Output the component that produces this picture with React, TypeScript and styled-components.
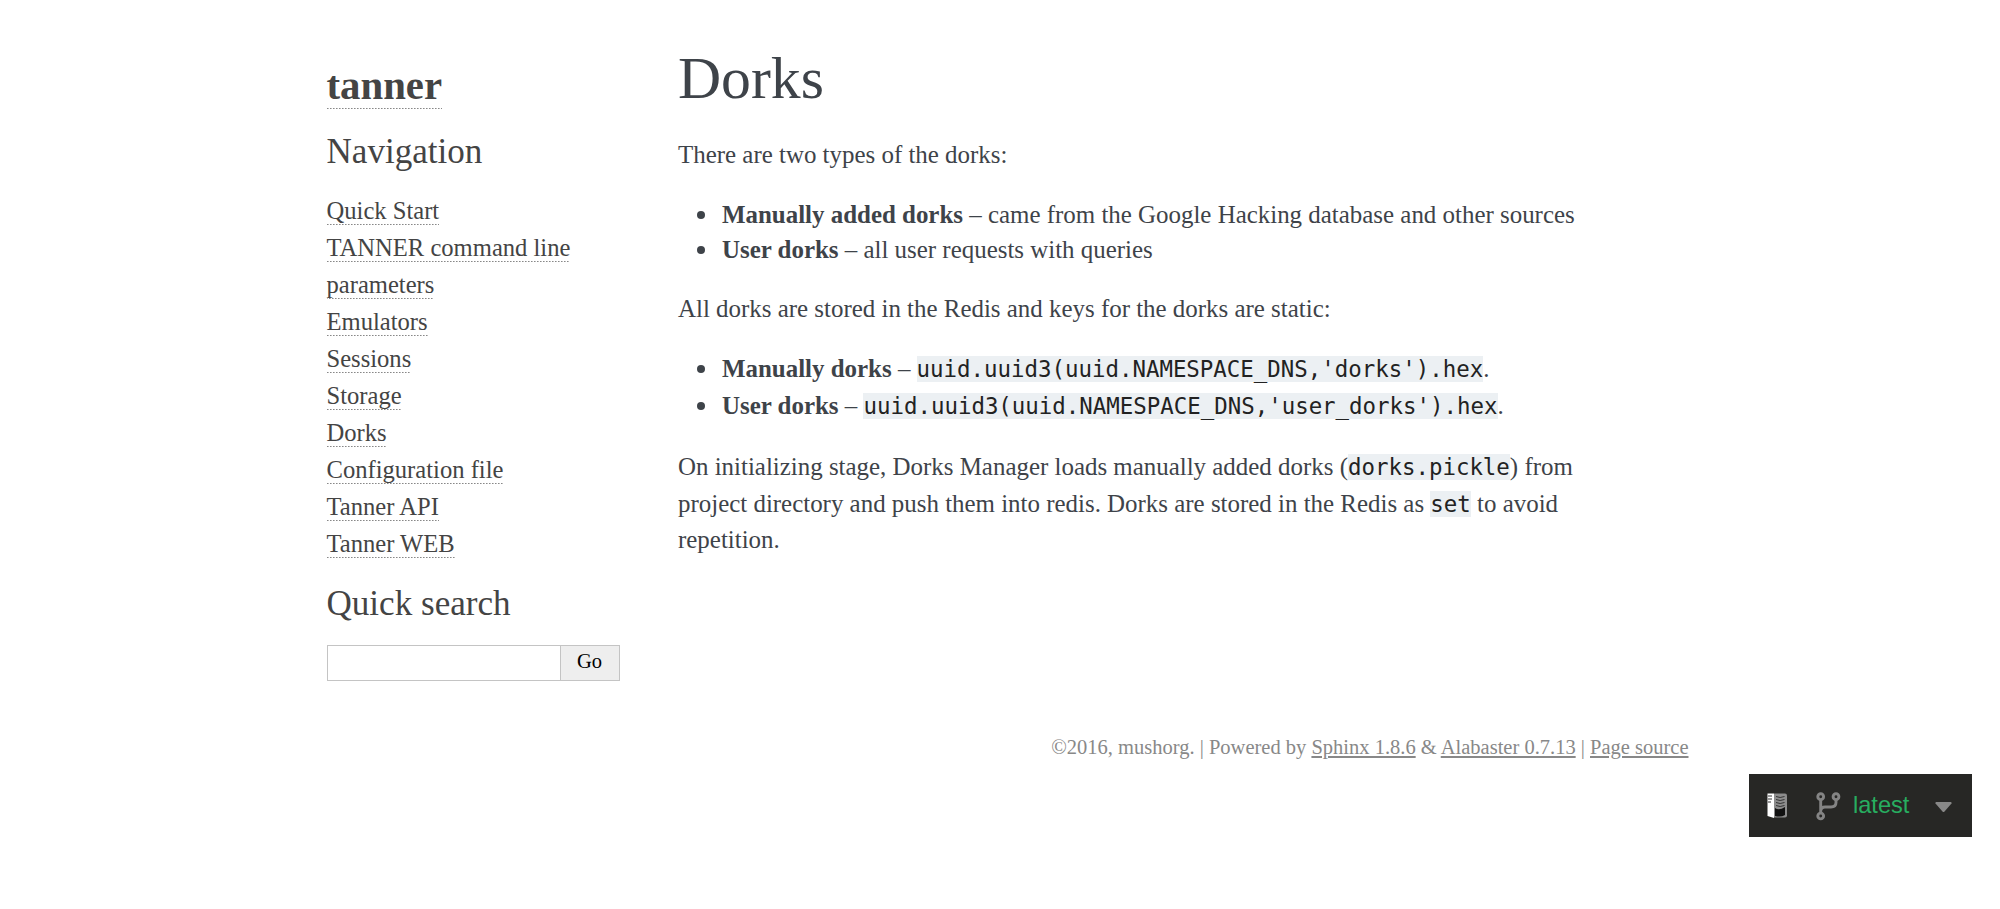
import React from "react";
import styled, { createGlobalStyle } from "styled-components";

const GlobalStyle = createGlobalStyle`
  body { margin: 0; background: #fff; color: #3e4349; font-family: "Liberation Serif", serif; }
  * { box-sizing: border-box; }
`;

const Page = styled.div`
  width: 1377px;
  margin: 0 auto;
`;

const Columns = styled.div`
  display: flex;
`;

const Sidebar = styled.aside`
  width: 322.5px;
  padding: 58px 14px 0 15px;
  color: #444;
`;

const Logo = styled.h1`
  margin: 0;
  font-size: 40.8px;
  line-height: 56px;
`;

const SideLink = styled.a`
  color: #444;
  text-decoration: none;
  padding-bottom: 1px;
  background: linear-gradient(90deg, #888 0 1px, #bbb 1px 2px, transparent 2px) left bottom / 3px 1px repeat-x;
`;

const SideHeading = styled.h3<{ $top: number; $bottom: number }>`
  margin: ${(p) => p.$top}px 0 ${(p) => p.$bottom}px;
  font-size: 35.1px;
  font-weight: 400;
  line-height: 46px;
`;

const NavList = styled.ul`
  list-style: none;
  margin: 0;
  padding: 0;
  font-size: 24.6px;
  line-height: 36.95px;
`;

const SearchForm = styled.form`
  display: flex;
  width: 293px;
  height: 36px;
`;

const SearchInput = styled.input`
  width: 233px;
  height: 36px;
  border: 1px solid #c4c4c4;
  border-right: 0;
  background: #fff;
  outline: none;
`;

const SearchButton = styled.button`
  width: 60px;
  height: 36px;
  padding: 0 0 3px;
  border: 1px solid #c4c4c4;
  background: #eee;
  color: #000;
  font: 20.5px "Liberation Serif", serif;
`;

const Body = styled.main`
  width: 1054px;
  padding: 44px 44px 0;
  font-size: 24.93px;
  line-height: 35.5px;
`;

const Title = styled.h1`
  margin: 0;
  font-size: 59.7px;
  font-weight: 400;
  line-height: 68px;
`;

const Paragraph = styled.p<{ $top: number }>`
  margin: ${(p) => p.$top}px 0 0;
`;

const BulletList = styled.ul<{ $top: number; $pitch?: number }>`
  list-style: none;
  margin: ${(p) => p.$top}px 0 0;
  padding: 0 0 0 44px;
  line-height: ${(p) => p.$pitch ?? 35.5}px;
  li::before {
    content: "";
    display: inline-block;
    width: 8px;
    height: 8px;
    margin: 0 17.5px 0 -25.5px;
    border-radius: 50%;
    background: currentColor;
    vertical-align: 4px;
  }
`;

const Code = styled.code`
  background: #ecf0f3;
  color: #222;
  font-family: "DejaVu Sans Mono", monospace;
  font-size: 22.42px;
`;

const Footer = styled.footer`
  margin-top: 52px;
  text-align: right;
  color: #888;
  font-size: 20.5px;
  line-height: 28px;
  a { color: #888; }
`;

const VersionBadge = styled.div`
  position: fixed;
  right: 28px;
  top: 774px;
  width: 223px;
  height: 63px;
  display: flex;
  align-items: center;
  background: #272725;
  color: #27ae60;
  font: 23.6px "Liberation Sans", sans-serif;
`;

const BadgeLabel = styled.span`
  margin-left: 3px;
  width: 81px;
  padding-bottom: 1px;
`;

const links = ["Quick Start", "TANNER command line parameters", "Emulators", "Sessions", "Storage", "Dorks", "Configuration file", "Tanner API", "Tanner WEB"];

const BadgeIcons = () => (
  <svg width="101" height="63" viewBox="0 0 101 63">
    <path d="M18.500 19.500h6.500v24.500l-6.500-2z" fill="#fff" />
    <path d="M25 19.500h11q2 0 2 2v20q0 2-2 2h-11z" fill="#8c8c8c" />
    <path d="M26 34q4 3 10-1v8q-4 2.500-10 1z" fill="#111" />
    <path d="M27 22.500q4 2 8.500 0M27 25.500q4 2 8.500 0M27 28.500q4 2 8.500 0M27 31.500q4 2 8.500 0M19 22h4M19 25h4M19 28h3" fill="none" stroke="#333" />
    <g fill="none" stroke="#848484" strokeWidth="2.900">
      <circle cx="71.700" cy="22.700" r="2.900" />
      <circle cx="87" cy="22.700" r="2.900" />
      <circle cx="71.700" cy="42" r="2.900" />
      <path d="M71.700 25.500v14M87 25.500v3q0 4.500-5 4.500h-6q-4 0-4.300 4" />
    </g>
  </svg>
);

export default function App() {
  return (
    <>
      <GlobalStyle />
      <Page>
        <Columns>
          <Sidebar>
            <Logo><SideLink>tanner</SideLink></Logo>
            <SideHeading $top={15} $bottom={18}>Navigation</SideHeading>
            <NavList>
              {links.map((l) => <li key={l}><SideLink>{l}</SideLink></li>)}
            </NavList>
            <SideHeading $top={18} $bottom={18}>Quick search</SideHeading>
            <SearchForm>
              <SearchInput />
              <SearchButton type="button">Go</SearchButton>
            </SearchForm>
          </Sidebar>
          <Body>
            <Title>Dorks</Title>
            <Paragraph $top={25}>There are two types of the dorks:</Paragraph>
            <BulletList $top={24}>
              <li><strong>Manually added dorks</strong> – came from the Google Hacking database and other sources</li>
              <li><strong>User dorks</strong> – all user requests with queries</li>
            </BulletList>
            <Paragraph $top={23}>All dorks are stored in the Redis and keys for the dorks are static:</Paragraph>
            <BulletList $top={25} $pitch={36.5}>
              <li><strong>Manually dorks</strong> – <Code>uuid.uuid3(uuid.NAMESPACE_DNS,'dorks').hex</Code>.</li>
              <li><strong>User dorks</strong> – <Code>uuid.uuid3(uuid.NAMESPACE_DNS,'user_dorks').hex</Code>.</li>
            </BulletList>
            <Paragraph $top={25}>
              On initializing stage, Dorks Manager loads manually added dorks (<Code>dorks.pickle</Code>) from project directory and push them into redis. Dorks are stored in the Redis as <Code>set</Code> to avoid repetition.
            </Paragraph>
          </Body>
        </Columns>
        <Footer>
          ©2016, mushorg. | Powered by <a href="#">Sphinx 1.8.6</a> &amp; <a href="#">Alabaster 0.7.13</a> | <a href="#">Page source</a>
        </Footer>
      </Page>
      <VersionBadge>
        <BadgeIcons />
        <BadgeLabel>latest</BadgeLabel>
        <svg width="20" height="14" viewBox="0 0 20 14">
          <path d="M2 3h15q1 .5.500 1.500l-7 8q-1 1-2 0l-7-8q-.5-1 .5-1.500z" fill="#888" />
        </svg>
      </VersionBadge>
    </>
  );
}
